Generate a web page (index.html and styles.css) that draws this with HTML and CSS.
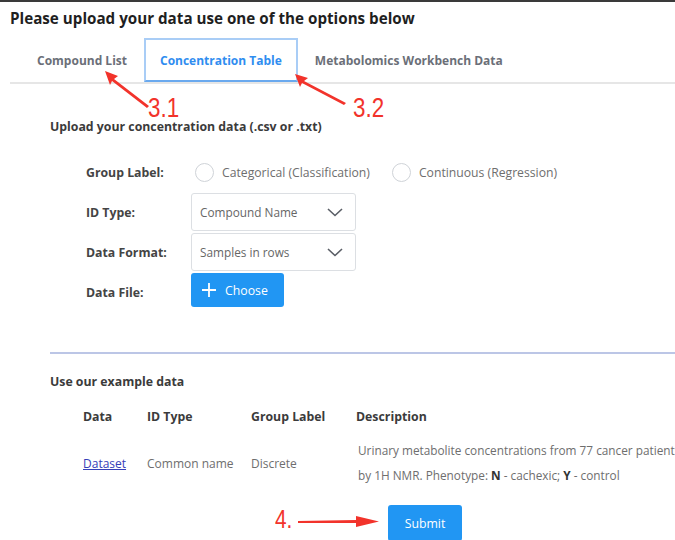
FILE: index.html
```html
<!DOCTYPE html>
<html>
<head>
<meta charset="utf-8">
<link rel="stylesheet" href="styles.css">
</head>
<body>
<div class="page">
  <h1 class="title">Please upload your data use one of the options below</h1>
  <div class="tabs">
    <div class="tab">Compound List</div>
    <div class="tab active">Concentration Table</div>
    <div class="tab">Metabolomics Workbench Data</div>
  </div>

  <section class="upload">
    <h2 class="section-title">Upload your concentration data (.csv or .txt)</h2>
    <div class="form">
      <div class="label">Group Label:</div>
      <div class="control radios">
        <span class="radio"><span class="circle"></span>Categorical (Classification)</span>
        <span class="radio"><span class="circle"></span>Continuous (Regression)</span>
      </div>

      <div class="label">ID Type:</div>
      <div class="control">
        <div class="select"><span>Compound Name</span>
          <svg class="chev" width="16" height="9" viewBox="0 0 16 9"><polyline points="1,1 8,7.5 15,1" fill="none" stroke="#5a5e66" stroke-width="1.6"/></svg>
        </div>
      </div>

      <div class="label">Data Format:</div>
      <div class="control">
        <div class="select"><span>Samples in rows</span>
          <svg class="chev" width="16" height="9" viewBox="0 0 16 9"><polyline points="1,1 8,7.5 15,1" fill="none" stroke="#5a5e66" stroke-width="1.6"/></svg>
        </div>
      </div>

      <div class="label">Data File:</div>
      <div class="control top">
        <div class="btn choose">
          <svg width="16" height="16" viewBox="0 0 16 16"><path d="M8 1v14M1 8h14" stroke="#fff" stroke-width="1.8"/></svg>
          <span>Choose</span>
        </div>
      </div>
    </div>
  </section>

  <hr class="divider">

  <section class="example">
    <h2 class="section-title">Use our example data</h2>
    <table class="data-table">
      <colgroup>
        <col class="c1"><col class="c2"><col class="c3"><col class="c4">
      </colgroup>
      <tr class="head">
        <th>Data</th>
        <th>ID Type</th>
        <th>Group Label</th>
        <th>Description</th>
      </tr>
      <tr class="row">
        <td><a class="link">Dataset</a></td>
        <td>Common name</td>
        <td>Discrete</td>
        <td class="desc">Urinary metabolite concentrations from 77 cancer patients measured<br>by 1H NMR. Phenotype: <b>N</b> - cachexic; <b>Y</b> - control</td>
      </tr>
    </table>
    <div class="submit-row">
      <div class="btn submit">Submit</div>
    </div>
  </section>

  <!-- red annotation overlays -->
  <svg class="annot" width="675" height="540" viewBox="0 0 675 540">
    <g fill="#f2332b">
      <polygon points="105,71 118,76 114,79 149,106 147,108 112,81 110,85"/>
      <polygon points="295,74 308,78 304,81 346,103 344,105 302,83 300,87"/>
      <polygon points="298,521 356,520 356,516 379,521.5 356,527 356,523 298,523"/>
    </g>
  </svg>
  <div class="num n31">3.1</div>
  <div class="num n32">3.2</div>
  <div class="num n4">4.</div>
</div>
</body>
</html>
```

FILE: styles.css
```css
* { box-sizing: border-box; }
html, body { margin: 0; padding: 0; }
body {
  width: 675px;
  height: 540px;
  overflow: hidden;
  background: #fff;
  font-family: "Open Sans", "Noto Sans", sans-serif;
  color: #333;
}
.page {
  position: relative;
  height: 540px;
  overflow: hidden;
  border-top: 2px solid #3a3a3a;
}
.title {
  margin: 0;
  padding: 6px 0 0 10px;
  height: 36px;
  font-size: 15.2px;
  font-weight: 700;
  color: #1f1f1f;
  white-space: nowrap;
}
.tabs {
  display: flex;
  margin-left: 10px;
  padding-left: 10px;
  border-bottom: 2px solid #e6e6e6;
  height: 46px;
}
.tab {
  display: flex;
  align-items: center;
  padding: 0 17px;
  height: 44px;
  font-size: 12px;
  font-weight: 700;
  color: #6b6f78;
  white-space: nowrap;
}
.tab.active {
  color: #2f8df0;
  border: 2px solid #a9cdf6;
  border-bottom-color: #6aa9ee;
  padding: 0 14px;
}
.upload { padding-left: 50px; }
.section-title {
  margin: 0;
  font-size: 12.3px;
  font-weight: 700;
  color: #3b3b3b;
}
.upload .section-title { padding-top: 34px; height: 69px; }
.form {
  display: grid;
  grid-template-columns: 105px auto;
  grid-auto-rows: 38px;
  row-gap: 2px;
  padding-left: 36px;
}
.label {
  display: flex;
  align-items: center;
  font-size: 12.3px;
  font-weight: 700;
  color: #444;
}
.control { display: flex; align-items: center; }
.control.top { align-items: flex-start; }
.radios { gap: 22px; }
.radio {
  display: flex;
  align-items: center;
  font-size: 12.2px;
  color: #6e6e6e;
}
.circle {
  width: 19px;
  height: 19px;
  border: 1.5px solid #cfd3d8;
  border-radius: 50%;
  margin-right: 8px;
}
.radio:first-child .circle { margin-left: 4px; }
.select {
  width: 165px;
  height: 38px;
  border: 1px solid #dcdfe3;
  border-radius: 3px;
  display: flex;
  align-items: center;
  justify-content: space-between;
  padding: 0 12px 0 8px;
  font-size: 11.8px;
  color: #666;
}
.btn {
  background: #2196f3;
  color: #fff;
  border-radius: 3px;
  display: flex;
  align-items: center;
}
.choose {
  width: 93px;
  height: 34px;
  padding-left: 10px;
  gap: 8px;
  font-size: 12.3px;
}
.divider {
  margin: 41px 0 0 50px;
  border: 0;
  height: 2px;
  background: #bcc6e6;
}
.example { padding-left: 50px; }
.example .section-title { padding-top: 19px; height: 50px; }
.data-table {
  margin-left: 33px;
  border-collapse: collapse;
  table-layout: fixed;
  width: 693px;
  font-size: 12px;
}
.c1 { width: 64px; }
.c2 { width: 104px; }
.c3 { width: 105px; }
.c4 { width: 420px; }
.data-table th {
  text-align: left;
  font-weight: 700;
  font-size: 12.3px;
  color: #3b3b3b;
  padding: 0;
  height: 24px;
  vertical-align: middle;
  white-space: nowrap;
}
.row td {
  padding: 10px 0 0 0;
  color: #6e6e6e;
  vertical-align: middle;
  white-space: nowrap;
}
.row td.desc { line-height: 25px; padding-left: 2px; font-size: 11.8px; }
.desc b { color: #333; }
.link { color: #3540b8; text-decoration: underline; }
.submit-row { padding: 17px 0 0 338px; }
.submit {
  width: 74px;
  height: 36px;
  justify-content: center;
  font-size: 12.3px;
}
.annot { position: absolute; left: 0; top: -2px; pointer-events: none; }
.num {
  position: absolute;
  font-family: "Liberation Sans", sans-serif;
  font-size: 28px;
  line-height: 28px;
  color: #f2332b;
  transform: scaleX(0.8);
  transform-origin: left top;
}
.n31 { left: 148px; top: 92px; }
.n32 { left: 353px; top: 92px; }
.n4 { left: 275px; top: 503px; font-size: 26px; }
```
